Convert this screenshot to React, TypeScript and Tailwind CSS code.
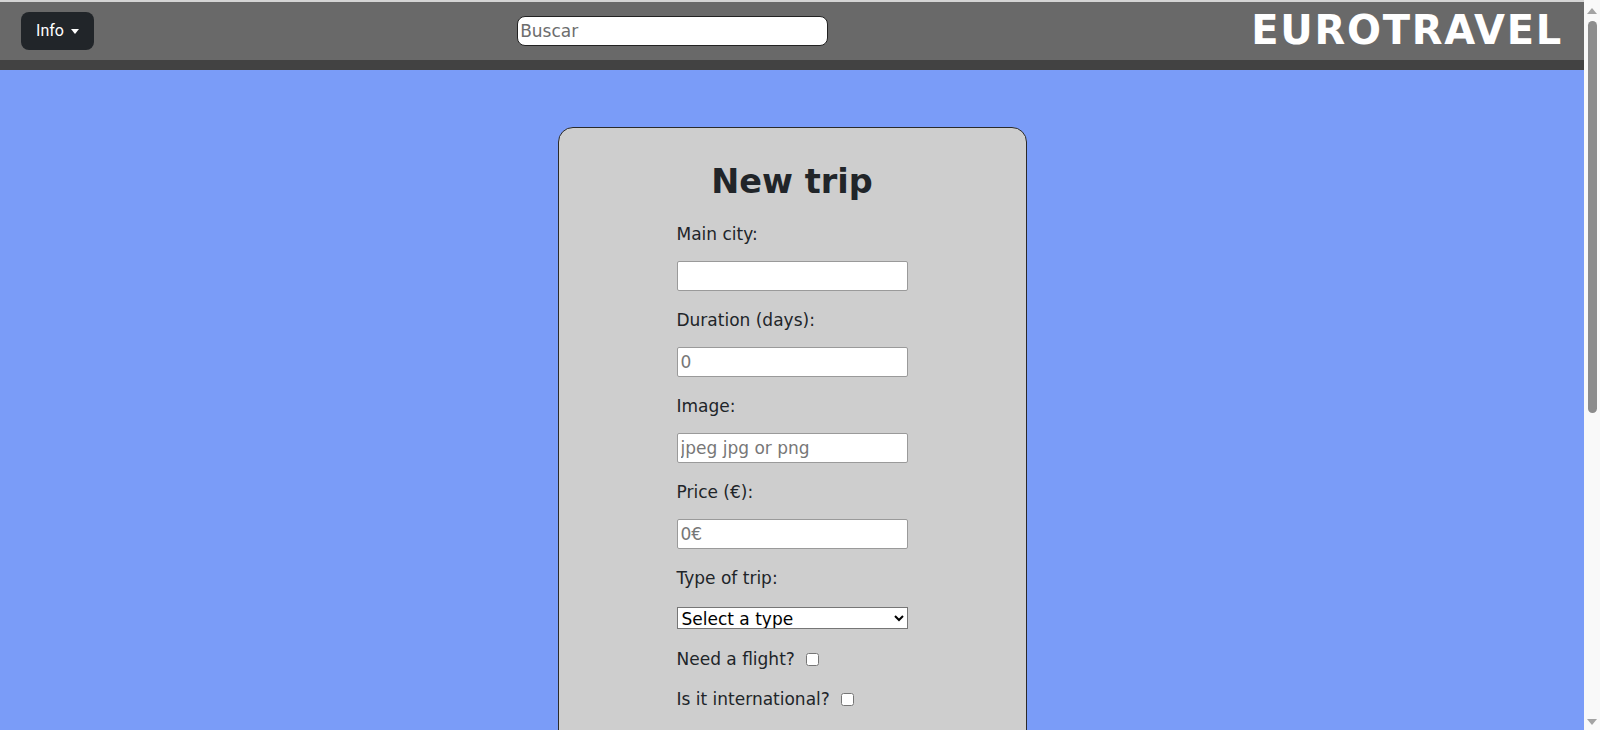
import React from 'react'

const fields = [
  { label: 'Main city:', placeholder: '' },
  { label: 'Duration (days):', placeholder: '0' },
  { label: 'Image:', placeholder: 'jpeg jpg or png' },
  { label: 'Price (€):', placeholder: '0€' }
]

const Header = () => {
  return (
    <header className="border-t-2 border-[#d4d4d4]">
      <div className="h-[58px] bg-[#696969] px-[21px] flex items-center justify-between">
        <button className="h-[38px] w-[73px] rounded-[8px] bg-[#212529] text-white text-[16px] flex items-center justify-center gap-[7px] font-['Roboto',sans-serif]">
          Info
          <span className="w-0 h-0 border-x-[4px] border-x-transparent border-t-[5px] border-t-white" />
        </button>
        <input
          placeholder="Buscar"
          className="h-[30px] w-[311px] rounded-[8px] bg-white border border-[#222] px-[2px] text-[17px] placeholder:text-[#6d6d6d] font-['DejaVu_Sans',sans-serif] outline-none"
        />
        <span className="text-white font-bold text-[40px] tracking-[1.7px] leading-none font-['DejaVu_Sans',sans-serif] -mt-[2px]">EUROTRAVEL</span>
      </div>
      <div className="h-[10px] bg-[#424242]" />
    </header>
  )
}

const TripForm = () => {
  return (
    <section className="w-[469px] bg-[#cecece] border border-[#2a2a2a] rounded-[15px] pt-[34px] pb-[60px] text-[#212529] font-['DejaVu_Sans',sans-serif]">
      <h1 className="text-center font-bold text-[33.5px] leading-[40px] mb-[23px]">New trip</h1>
      <div className="w-[231px] mx-auto flex flex-col text-[17px]">
        {fields.map((f, i) => {
          return (
            <div key={i} className="flex flex-col">
              <label className="h-[19px] leading-[19px] mb-[17px]">{f.label}</label>
              <input
                placeholder={f.placeholder}
                className="h-[30px] w-[231px] bg-white border border-[#9a9a9a] rounded-[2px] px-[3px] text-[17px] placeholder:text-[#777] mb-[20px] outline-none"
              />
            </div>
          )
        })}
        <label className="h-[19px] leading-[19px] mb-[19px]">Type of trip:</label>
        <select className="h-[22px] w-[231px] bg-white border border-[#767676] text-black text-[17px] pl-0 mb-[21px]">
          <option>Select a type</option>
          <option>Cultural</option>
          <option>Adventure</option>
          <option>Relax</option>
        </select>
        <div className="h-[19px] flex items-center gap-[11px] mb-[21px]">
          <span>Need a flight?</span>
          <input type="checkbox" className="w-[13px] h-[13px]" />
        </div>
        <div className="h-[19px] flex items-center gap-[11px] mb-[21px]">
          <span>Is it international?</span>
          <input type="checkbox" className="w-[13px] h-[13px]" />
        </div>
        <label className="h-[19px] leading-[19px] mb-[17px]">Description:</label>
        <textarea className="h-[120px] w-[231px] bg-white border border-[#9a9a9a] rounded-[2px] mb-[24px]" />
        <button className="self-center h-[36px] px-[18px] rounded-[6px] bg-[#212529] text-white font-['Roboto',sans-serif]">
          Create trip
        </button>
      </div>
    </section>
  )
}

// page scrollbar as it shows in the screenshot
const ScrollBar = () => {
  return (
    <div className="w-[16px] h-full bg-[#f9f9f9] flex flex-col items-center">
      <svg width="10" height="6" viewBox="0 0 10 6" className="mt-[8px]">
        <path d="M5 0 L10 6 L0 6 Z" fill="#a3a3a3" />
      </svg>
      <div className="mt-[7px] w-[9px] h-[392px] rounded-full bg-[#8c8c8c]" />
      <div className="flex-1" />
      <svg width="10" height="6" viewBox="0 0 10 6" className="mb-[5px]">
        <path d="M0 0 L10 0 L5 6 Z" fill="#a3a3a3" />
      </svg>
    </div>
  )
}

export default function App() {
  return (
    <div className="flex h-[730px] overflow-hidden">
      <div className="flex-1 overflow-hidden">
        <div className="min-h-[1825px] bg-[#7a9cf8]">
          <Header />
          <main className="flex justify-center pt-[57px] pb-[200px]">
            <TripForm />
          </main>
        </div>
      </div>
      <ScrollBar />
    </div>
  )
}
